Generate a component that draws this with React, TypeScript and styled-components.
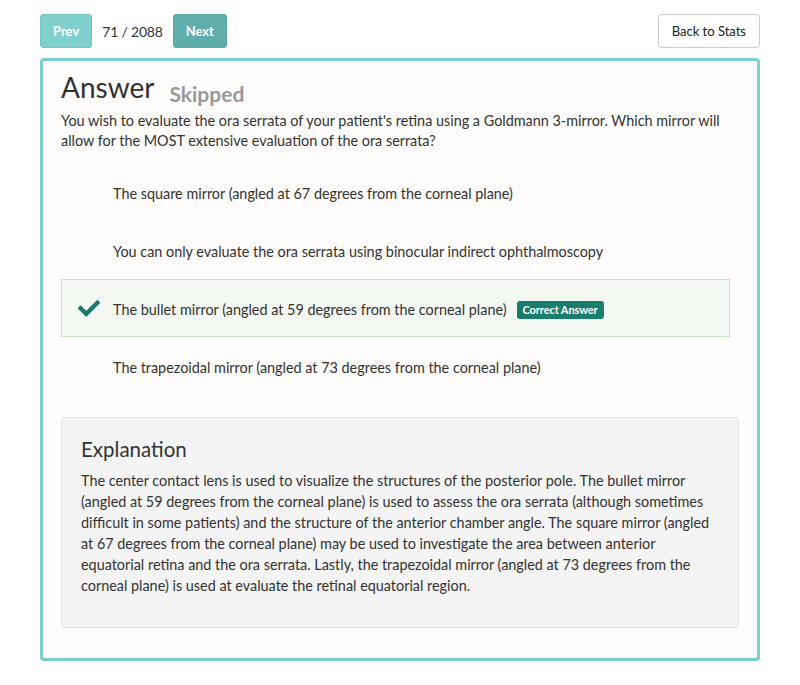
import React from "react";
import styled, { createGlobalStyle } from "styled-components";

const Global = createGlobalStyle`
  html, body { margin: 0; padding: 0; background: #ffffff; }
  body { font-family: "Lato", "Liberation Sans", sans-serif; color: #333; }
  * { box-sizing: border-box; }
`;

const Page = styled.div`
  padding: 14px 40px 0 40px;
  width: 800px;
`;

const TopBar = styled.div`
  display: flex;
  align-items: center;
  justify-content: space-between;
  height: 34px;
`;

const NavGroup = styled.div`
  display: flex;
  align-items: center;
  gap: 10px;
`;

const NavButton = styled.button<{ $dark?: boolean }>`
  height: 34px;
  padding: 0 12px;
  border: 1px solid ${(p) => (p.$dark ? "#5aa9a6" : "#73c8c6")};
  border-radius: 3px;
  background: ${(p) => (p.$dark ? "#5faeac" : "#80d0ce")};
  color: #fff;
  font-family: inherit;
  font-weight: 700;
  font-size: 13px;
`;

const Counter = styled.span`
  font-size: 14px;
  color: #333;
  letter-spacing: -0.2px;
`;

const BackButton = styled.button`
  height: 34px;
  padding: 0 13px;
  border: 1px solid #ccc;
  border-radius: 4px;
  background: #fff;
  color: #222;
  font-family: inherit;
  font-size: 13px;
`;

const Card = styled.div`
  margin-top: 10px;
  border: 3px solid #7ecfcc;
  border-radius: 4px;
  background: #fdfcfa;
  padding: 8px 18px 30px 18px;
`;

const TitleRow = styled.div`
  display: flex;
  align-items: baseline;
  gap: 15px;
`;

const Title = styled.h1`
  margin: 0;
  font-size: 28px;
  font-weight: 400;
  color: #333;
  line-height: 36px;
`;

const Status = styled.span`
  font-size: 21px;
  font-weight: 700;
  color: #999;
  position: relative;
  top: 4px;
`;

const Question = styled.p`
  margin: 6px 0 12px 0;
  font-size: 14.4px;
  line-height: 20px;
  color: #333;
`;

const Options = styled.div`
  display: flex;
  flex-direction: column;
  margin-right: 9px;
`;

const Option = styled.div<{ $correct?: boolean }>`
  display: flex;
  align-items: center;
  height: 58px;
  padding-left: 51px;
  padding-top: 2px;
  position: relative;
  font-size: 14.4px;
  color: #333;
  border: 1px solid ${(p) => (p.$correct ? "#c8e5c3" : "transparent")};
  background: ${(p) => (p.$correct ? "#f3f9f2" : "transparent")};
`;

const Check = styled.svg`
  position: absolute;
  left: 16px;
  top: 50%;
  transform: translateY(-50%);
  width: 22px;
  height: 18px;
`;

const Badge = styled.span`
  margin-left: 10px;
  background: #1b7d6e;
  color: #fff;
  font-size: 11px;
  font-weight: 700;
  padding: 3px 6px;
  border-radius: 3px;
  line-height: 12px;
  letter-spacing: -0.1px;
  position: relative;
  top: 1px;
`;

const Explanation = styled.div`
  margin-top: 22px;
  background: #f4f4f4;
  border: 1px solid #e3e3e3;
  border-radius: 4px;
  padding: 16px 19px 31px 19px;
`;

const ExplTitle = styled.h2`
  margin: 0 0 6px 0;
  font-size: 20.5px;
  font-weight: 400;
  color: #333;
  line-height: 30px;
`;

const ExplText = styled.p`
  margin: 0;
  font-size: 14.4px;
  line-height: 21px;
  color: #333;
`;

const options = [
  { text: "The square mirror (angled at 67 degrees from the corneal plane)" },
  { text: "You can only evaluate the ora serrata using binocular indirect ophthalmoscopy" },
  { text: "The bullet mirror (angled at 59 degrees from the corneal plane)", correct: true },
  { text: "The trapezoidal mirror (angled at 73 degrees from the corneal plane)" },
];

export default function App() {
  return (
    <>
      <Global />
      <Page>
        <TopBar>
          <NavGroup>
            <NavButton>Prev</NavButton>
            <Counter>71 / 2088</Counter>
            <NavButton $dark>Next</NavButton>
          </NavGroup>
          <BackButton>Back to Stats</BackButton>
        </TopBar>
        <Card>
          <TitleRow>
            <Title>Answer</Title>
            <Status>Skipped</Status>
          </TitleRow>
          <Question>
            You wish to evaluate the ora serrata of your patient's retina using a Goldmann 3-mirror. Which mirror will
            allow for the MOST extensive evaluation of the ora serrata?
          </Question>
          <Options>
            {options.map((o, i) => (
              <Option key={i} $correct={o.correct}>
                {o.correct && (
                  <Check viewBox="0 0 512 400">
                    <path
                      fill="#1b7a6d"
                      d="M173.9 389.4L7.5 223c-10-10-10-26.2 0-36.2l36.2-36.2c10-10 26.2-10 36.2 0L192 262.7 432.1 22.6c10-10 26.2-10 36.2 0l36.2 36.2c10 10 10 26.2 0 36.2L210.1 389.4c-10 10-26.2 10-36.2 0z"
                    />
                  </Check>
                )}
                <span>{o.text}</span>
                {o.correct && <Badge>Correct Answer</Badge>}
              </Option>
            ))}
          </Options>
          <Explanation>
            <ExplTitle>Explanation</ExplTitle>
            <ExplText>
              The center contact lens is used to visualize the structures of the posterior pole. The bullet mirror
              (angled at 59 degrees from the corneal plane) is used to assess the ora serrata (although sometimes
              difficult in some patients) and the structure of the anterior chamber angle. The square mirror (angled
              at 67 degrees from the corneal plane) may be used to investigate the area between anterior equatorial
              retina and the ora serrata. Lastly, the trapezoidal mirror (angled at 73 degrees from the corneal plane)
              is used at evaluate the retinal equatorial region.
            </ExplText>
          </Explanation>
        </Card>
      </Page>
    </>
  );
}
